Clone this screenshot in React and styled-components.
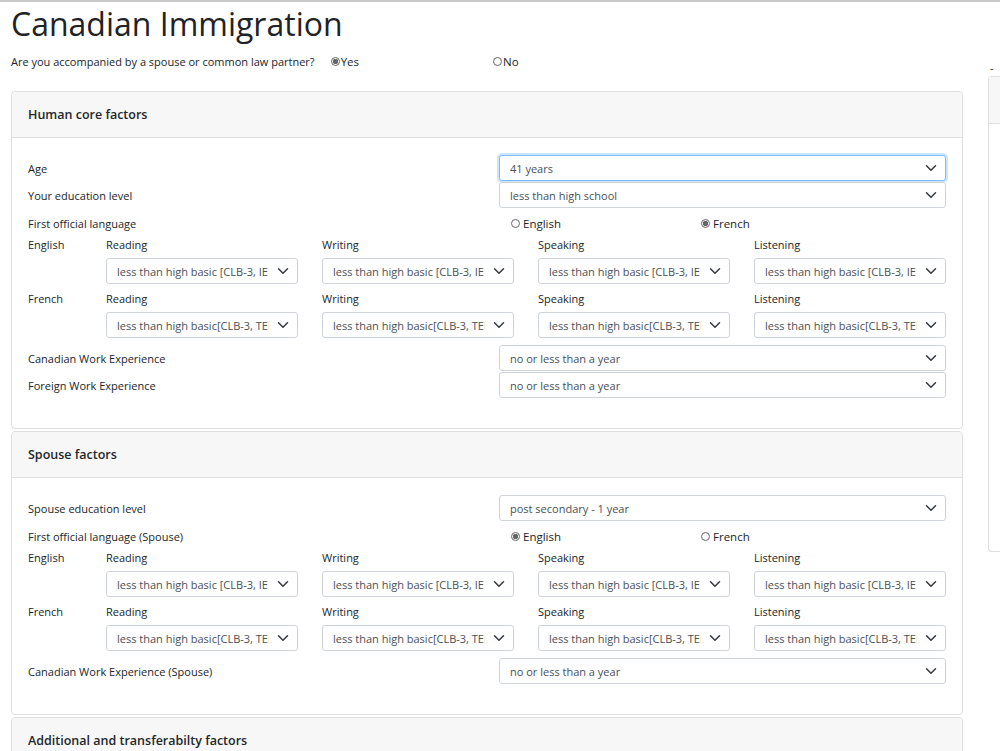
import React from "react";
import styled, { createGlobalStyle } from "styled-components";

const Global = createGlobalStyle`
  html, body { margin: 0; background: #fff; }
  body {
    font-family: "Open Sans", "Noto Sans", sans-serif;
    color: #212529;
    border-top: 2px solid #c8c8c8;
    overflow: hidden;
  }
`;

const scores = [
  "less than high basic [CLB-3, IE",
  "less than high basic[CLB-3, TEF",
];

export default function App() {
  return (
    <>
      <Global />
      <Page>
        <Main>
          <Title>Canadian Immigration</Title>
          <Question>
            <span>Are you accompanied by a spouse or common law partner?</span>
            <Choice style={{ marginLeft: 16 }}><Radio checked />Yes</Choice>
            <Choice style={{ marginLeft: 134 }}><Radio />No</Choice>
          </Question>

          <Card>
            <CardHeader>Human core factors</CardHeader>
            <CardBody>
              <Row label="Age"><Select value="41 years" focus /></Row>
              <Row label="Your education level"><Select value="less than high school" /></Row>
              <LangRow label="First official language" checked="French" />
              <Scores lang="English" text={scores[0]} />
              <Scores lang="French" text={scores[1]} />
              <Row label="Canadian Work Experience"><Select value="no or less than a year" /></Row>
              <Row label="Foreign Work Experience"><Select value="no or less than a year" /></Row>
            </CardBody>
          </Card>

          <Card>
            <CardHeader>Spouse factors</CardHeader>
            <CardBody>
              <Row label="Spouse education level"><Select value="post secondary - 1 year" /></Row>
              <LangRow label="First official language (Spouse)" checked="English" />
              <Scores lang="English" text={scores[0]} />
              <Scores lang="French" text={scores[1]} />
              <Row label="Canadian Work Experience (Spouse)"><Select value="no or less than a year" /></Row>
            </CardBody>
          </Card>

          <Card>
            <CardHeader>Additional and transferabilty factors</CardHeader>
            <CardBody />
          </Card>
        </Main>
        <Side>
          <Dash>-</Dash>
          <SideCard>
            <SideHeader />
          </SideCard>
        </Side>
      </Page>
    </>
  );
}

function Row({ label, children }) {
  return (
    <FieldRow>
      <Label>{label}</Label>
      {children}
    </FieldRow>
  );
}

function LangRow({ label, checked }) {
  return (
    <RadioRow>
      <Label>{label}</Label>
      <Choice style={{ marginLeft: 12 }}><Radio checked={checked === "English"} gap />English</Choice>
      <Choice><Radio checked={checked === "French"} gap />French</Choice>
    </RadioRow>
  );
}

function Scores({ lang, text }) {
  return (
    <ScoreGrid>
      <Label>{lang}</Label>
      {["Reading", "Writing", "Speaking", "Listening"].map((s) => (
        <ScoreCol key={s}>
          <SmallLabel>{s}</SmallLabel>
          <Select value={text} />
        </ScoreCol>
      ))}
    </ScoreGrid>
  );
}

function Select({ value, focus }) {
  return (
    <Box $focus={focus}>
      <BoxText>{value}</BoxText>
      <svg width="12" height="12" viewBox="0 0 16 16">
        <path d="M2 5l6 6 6-6" fill="none" stroke="#343a40" strokeWidth="2" strokeLinecap="round" strokeLinejoin="round" />
      </svg>
    </Box>
  );
}

const Page = styled.div`
  display: flex;
  padding-left: 11px;
  gap: 25px;
`;
const Main = styled.div`
  width: 952px;
  flex-shrink: 0;
`;
const Title = styled.h1`
  font-size: 32px;
  font-weight: 500;
  margin: 3px 0 8px;
  line-height: 38px;
  color: #1f2326;
`;
const Question = styled.div`
  display: flex;
  align-items: center;
  font-size: 11px;
  height: 20px;
  margin-bottom: 20px;
`;
const Choice = styled.label`
  display: flex;
  align-items: center;
  font-size: 11.5px;
`;
const Radio = styled.span`
  width: 9px;
  height: 9px;
  border-radius: 50%;
  border: 1px solid #666;
  box-sizing: border-box;
  margin-right: ${(p) => (p.gap ? "3px" : "1px")};
  background: ${(p) => (p.checked ? "radial-gradient(circle, #666 0 2.5px, #fff 3px)" : "#fff")};
`;
const Card = styled.div`
  border: 1px solid #dfdfdf;
  border-radius: 4px;
  margin-bottom: 2px;
  overflow: hidden;
`;
const CardHeader = styled.div`
  background: #f7f7f7;
  border-bottom: 1px solid #dfdfdf;
  height: 45px;
  padding-left: 16px;
  display: flex;
  align-items: center;
  font-size: 12.5px;
  font-weight: 600;
  color: #23272b;
`;
const CardBody = styled.div`
  padding: 17px 16px 29px;
  display: flex;
  flex-direction: column;
`;
const FieldRow = styled.div`
  display: grid;
  grid-template-columns: 471px 447px;
  align-items: center;
  margin-bottom: 1px;
`;
const RadioRow = styled.div`
  display: grid;
  grid-template-columns: 471px 202px 200px;
  align-items: center;
  height: 28px;
`;
const Label = styled.div`
  font-size: 11px;
  color: #212529;
`;
const SmallLabel = styled.div`
  font-size: 11px;
  color: #212529;
  height: 16px;
  margin-bottom: 5px;
`;
const ScoreGrid = styled.div`
  display: grid;
  grid-template-columns: 54px repeat(4, 192px);
  column-gap: 24px;
  margin-bottom: 7px;
  & > ${Label} { height: 16px; }
`;
const ScoreCol = styled.div`
  display: flex;
  flex-direction: column;
`;
const Box = styled.div`
  height: 26px;
  box-sizing: border-box;
  border: 1px solid ${(p) => (p.$focus ? "#80bdff" : "#ced4da")};
  box-shadow: ${(p) => (p.$focus ? "0 0 0 2px rgba(0,123,255,.2)" : "none")};
  border-radius: 3px;
  display: flex;
  align-items: center;
  padding: 0 8px 0 10px;
  gap: 8px;
  font-size: 11px;
  color: #495057;
  background: #fff;
  justify-content: space-between;
  min-width: 0;
`;
const BoxText = styled.span`
  white-space: nowrap;
  overflow: hidden;
  flex: 1;
  min-width: 0;
`;
const Side = styled.div`
  flex: 1;
  padding-top: 58px;
`;
const Dash = styled.div`
  font-size: 11px;
  height: 16px;
  padding-left: 2px;
`;
const SideCard = styled.div`
  border: 1px solid #dfdfdf;
  border-right: none;
  border-radius: 4px 0 0 4px;
  height: 474px;
`;
const SideHeader = styled.div`
  height: 46px;
  background: #f7f7f7;
  border-bottom: 1px solid #dfdfdf;
`;
